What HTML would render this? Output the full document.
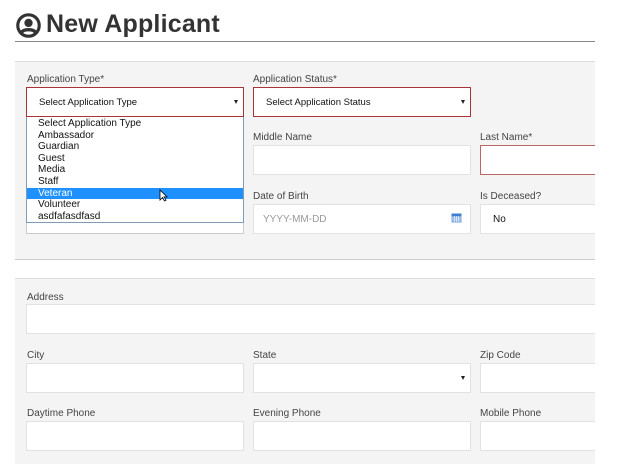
<!DOCTYPE html>
<html><head><style>
*{box-sizing:border-box;margin:0;padding:0}
body{width:617px;height:476px;background:#fff;font-family:"Liberation Sans",sans-serif;position:relative;overflow:hidden}
.a{position:absolute}
.panel{position:absolute;left:15px;width:580px;background:#f4f4f4}
.lbl{position:absolute;font-size:10px;color:#444}
.in{position:absolute;background:#fff;border:1px solid #e2e2e2;height:30px}
.sel{font-size:9.5px;color:#111;padding:9px 0 0 12px}
.arr{position:absolute;right:5px;top:12px;width:0;height:0;border-left:2px solid transparent;border-right:2px solid transparent;border-top:4px solid #222}
.red{border-color:#a33;border-width:1px}
</style></head><body>
<svg class="a" style="left:16px;top:13px" width="25" height="25" viewBox="0 0 24 24"><circle cx="12" cy="12" r="10.3" fill="none" stroke="#333" stroke-width="3"/><circle cx="12" cy="9.5" r="4" fill="#333"/><path d="M5 19c2-4 12-4 14 0" fill="none" stroke="#333" stroke-width="3.2"/></svg>
<div class="a" style="left:46px;top:10px;font-size:25px;font-weight:bold;color:#333;letter-spacing:.2px">New Applicant</div>
<div class="a" style="left:15px;top:41px;width:580px;height:1px;background:#888"></div>

<div class="panel" style="top:61px;height:199px;border-top:1px solid #ddd;border-bottom:1px solid #ccc"></div>
<div class="lbl" style="left:27px;top:74px">Application Type*</div>
<div class="in sel red" style="left:26px;top:87px;width:218px">Select Application Type<span class="arr"></span></div>
<div class="in" style="left:26px;top:117px;width:218px;height:117px;border-color:#ccc"></div>
<div class="a" style="left:26px;top:117px;width:218px;height:106px;background:#fff;border:1px solid #7f9db9;border-top:none;font-size:10px;line-height:11.6px;color:#111;padding-top:1px">
<div style="padding-left:11px">Select Application Type</div>
<div style="padding-left:11px">Ambassador</div>
<div style="padding-left:11px">Guardian</div>
<div style="padding-left:11px">Guest</div>
<div style="padding-left:11px">Media</div>
<div style="padding-left:11px">Staff</div>
<div style="padding-left:11px;background:#1e90ff;color:#fff">Veteran</div>
<div style="padding-left:11px">Volunteer</div>
<div style="padding-left:11px">asdfafasdfasd</div>
</div>
<svg class="a" style="left:159px;top:189px" width="9" height="13" viewBox="0 0 9 13"><path d="M1 1v10l2.5-2.5 2 3.5 1.5-.8-2-3.3H8z" fill="#fff" stroke="#000" stroke-width=".8"/></svg>

<div class="lbl" style="left:253px;top:74px">Application Status*</div>
<div class="in sel red" style="left:253px;top:87px;width:218px">Select Application Status<span class="arr"></span></div>

<div class="lbl" style="left:253px;top:132px">Middle Name</div>
<div class="in" style="left:253px;top:145px;width:218px"></div>
<div class="lbl" style="left:480px;top:132px">Last Name*</div>
<div class="in" style="left:480px;top:145px;width:130px;border-color:#b66"></div>

<div class="lbl" style="left:253px;top:191px">Date of Birth</div>
<div class="in" style="left:253px;top:204px;width:218px;height:30px;font-size:10px;color:#999;padding:9px 0 0 9px">YYYY-MM-DD
<svg class="a" style="left:197px;top:7px" width="11" height="11" viewBox="0 0 11 11"><rect x="0.5" y="1.5" width="10" height="9" fill="#7aa7e0"/><rect x="0.5" y="1.5" width="10" height="2.5" fill="#3f7fd0"/><path d="M1 6h9M1 8h9M3.5 4v6M5.5 4v6M7.5 4v6" stroke="#fff" stroke-width=".6"/></svg></div>
<div class="lbl" style="left:480px;top:191px">Is Deceased?</div>
<div class="in" style="left:480px;top:204px;width:130px;font-size:10px;color:#111;padding:9px 0 0 12px">No</div>

<div class="panel" style="top:278px;height:186px;border-top:1px solid #ddd"></div>
<div class="lbl" style="left:27px;top:292px">Address</div>
<div class="in" style="left:26px;top:304px;width:580px"></div>
<div class="lbl" style="left:27px;top:350px">City</div>
<div class="in" style="left:26px;top:363px;width:218px"></div>
<div class="lbl" style="left:253px;top:350px">State</div>
<div class="in" style="left:253px;top:363px;width:218px"><span class="arr"></span></div>
<div class="lbl" style="left:480px;top:350px">Zip Code</div>
<div class="in" style="left:480px;top:363px;width:130px"></div>
<div class="lbl" style="left:27px;top:408px">Daytime Phone</div>
<div class="in" style="left:26px;top:421px;width:218px"></div>
<div class="lbl" style="left:253px;top:408px">Evening Phone</div>
<div class="in" style="left:253px;top:421px;width:218px"></div>
<div class="lbl" style="left:480px;top:408px">Mobile Phone</div>
<div class="in" style="left:480px;top:421px;width:130px"></div>
<div class="a" style="left:595px;top:0;width:22px;height:476px;background:#fff"></div>
</body></html>
